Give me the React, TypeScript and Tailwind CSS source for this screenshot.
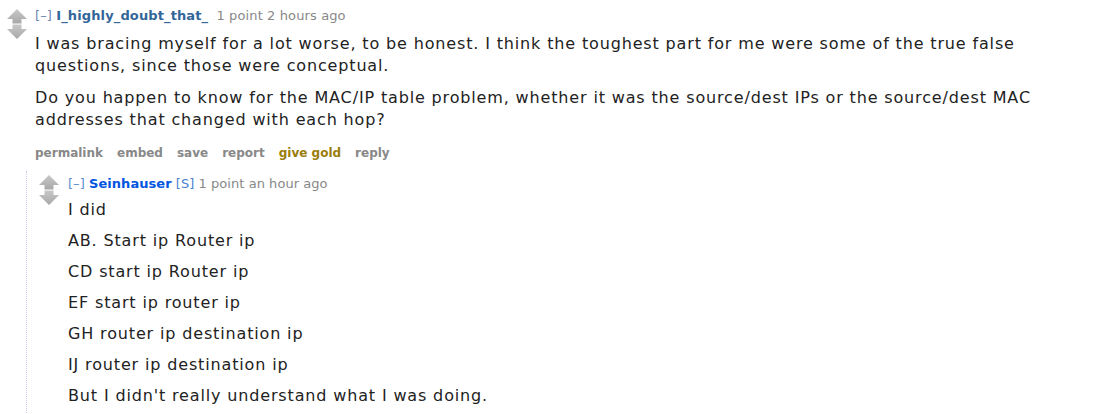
import React from "react";

function VoteArrows() {
    return (
        <svg width="20" height="30" viewBox="0 0 20 30" className="block">
            <defs>
                <linearGradient id="arrowGrad" x1="0" y1="0" x2="0" y2="1">
                    <stop offset="0" stopColor="#c8c8c8" />
                    <stop offset="0.5" stopColor="#b8b8b8" />
                    <stop offset="1" stopColor="#a8a8a8" />
                </linearGradient>
            </defs>
            {/* up arrow */}
            <path d="M10 0 L20 10 L14.5 10 L14.5 14.5 L5.5 14.5 L5.5 10 L0 10 Z" fill="url(#arrowGrad)" />
            {/* down arrow */}
            <path d="M5.5 15.5 L14.5 15.5 L14.5 20 L20 20 L10 30 L0 20 L5.5 20 Z" fill="url(#arrowGrad)" />
        </svg>
    );
}

const links = ["permalink", "embed", "save", "report", "give gold", "reply"];

const childLines = [
    "I did",
    "AB. Start ip Router ip",
    "CD start ip Router ip",
    "EF start ip router ip",
    "GH router ip destination ip",
    "IJ router ip destination ip",
    "But I didn't really understand what I was doing.",
];

export default function App() {
    return (
        <div className="min-h-[414px] bg-white font-['DejaVu_Sans',Verdana,sans-serif] pt-[7px] text-[#222]">
            <div className="flex">
                {/* arrows */}
                <div className="w-[35px] shrink-0 pl-[7px] pt-[2px]">
                    <VoteArrows />
                </div>

                <div className="min-w-0 flex-1">
                    {/* tagline */}
                    <div className="text-[13px] leading-[18px] tracking-[0.12px] text-[#888]">
                        <span className="text-[#6a86b0]">[–]</span>{" "}
                        <span className="font-bold text-[#336699]">I_highly_doubt_that_</span>{" "}
                        <span className="ml-1">1 point</span> 2 hours ago
                    </div>

                    {/* body */}
                    <div className="mt-[8px] max-w-[1016px] text-[16px] leading-[22px] tracking-[0.85px]">
                        <p>
                            I was bracing myself for a lot worse, to be honest. I think the toughest part for me were some of the true false questions, since those were conceptual.
                        </p>
                        <p className="mt-[10px]">
                            Do you happen to know for the MAC/IP table problem, whether it was the source/dest IPs or the source/dest MAC addresses that changed with each hop?
                        </p>
                    </div>

                    {/* buttons */}
                    <ul className="mt-[13px] flex gap-[14px] text-[12px] font-bold leading-[18px] text-[#888]">
                        {links.map((l) => (
                            <li key={l} className={l === "give gold" ? "text-[#9a7d0a]" : ""}>
                                {l}
                            </li>
                        ))}
                    </ul>
                </div>
            </div>

            {/* child comment */}
            <div className="mt-[9px] ml-[26px] border-l border-dotted border-[#cfc8ec] pl-[12px] pt-[4px] pb-[6px]">
                <div className="flex">
                    <div className="w-[29px] shrink-0">
                        <VoteArrows />
                    </div>
                    <div className="min-w-0 flex-1">
                        <div className="text-[13px] leading-[18px] tracking-[0.05px] text-[#888]">
                            <span className="text-[#5b8fd0]">[–]</span>{" "}
                            <span className="font-bold text-[#0055df]">Seinhauser</span>{" "}
                            <span className="text-[#4a7fd0]">[S]</span> 1 point an hour ago
                        </div>
                        <div className="mt-[6px] text-[16px] leading-[22px] tracking-[0.85px]">
                            {childLines.map((line, i) => (
                                <p key={i} className={i === 0 ? "" : "mt-[9px]"}>
                                    {line}
                                </p>
                            ))}
                        </div>
                    </div>
                </div>
            </div>
        </div>
    );
}
